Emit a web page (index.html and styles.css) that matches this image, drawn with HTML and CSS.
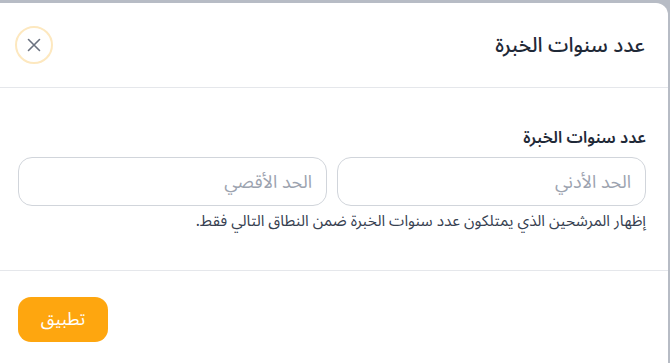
FILE: index.html
```html
<!DOCTYPE html>
<html lang="ar" dir="rtl">
<head>
<meta charset="utf-8">
<link rel="stylesheet" href="styles.css">
</head>
<body>
<div class="backdrop"></div>
<div class="modal">
  <div class="modal-header">
    <h2 class="title">عدد سنوات الخبرة</h2>
    <button class="close" aria-label="إغلاق">
      <svg width="14" height="14" viewBox="0 0 14 14"><path d="M1.5 1.5 L12.5 12.5 M12.5 1.5 L1.5 12.5" stroke="#6b7280" stroke-width="1.6" stroke-linecap="round" fill="none"/></svg>
    </button>
  </div>
  <div class="modal-body">
    <label class="label">عدد سنوات الخبرة</label>
    <div class="inputs">
      <input class="field" type="text" placeholder="الحد الأدني">
      <input class="field" type="text" placeholder="الحد الأقصي">
    </div>
    <p class="help">إظهار المرشحين الذي يمتلكون عدد سنوات الخبرة ضمن النطاق التالي فقط.</p>
  </div>
  <div class="modal-footer">
    <button class="apply">تطبيق</button>
  </div>
</div>
</body>
</html>
```
FILE: styles.css
```css
* { box-sizing: border-box; }
html, body { margin: 0; padding: 0; }
body {
  width: 670px;
  height: 363px;
  overflow: hidden;
  background: #b7bcc5;
  font-family: "Noto Sans Arabic", "Noto Sans", "DejaVu Sans", sans-serif;
  color: #1f2937;
}
.backdrop { height: 3px; }
.modal {
  background: #fff;
  width: 668px;
  margin-right: 2px;
  border-top-right-radius: 12px;
  height: 360px;
}
.modal-header {
  height: 85px;
  display: flex;
  align-items: center;
  justify-content: space-between;
  padding: 0 23px 0 15px;
  border-bottom: 1px solid #e5e7eb;
}
.title {
  margin: 0;
  font-size: 20.5px;
  font-weight: 500;
  color: #1f2937;
}
.close {
  width: 38px;
  height: 38px;
  border-radius: 50%;
  border: 2px solid #fde8bf;
  background: #fff;
  display: flex;
  align-items: center;
  justify-content: center;
  padding: 0;
}
.modal-body {
  padding: 38px 22px 0 18px;
  height: 183px;
  border-bottom: 1px solid #e5e7eb;
}
.label {
  display: block;
  font-size: 16.3px;
  font-weight: 600;
  color: #1f2937;
  line-height: 24px;
  margin-bottom: 7px;
}
.inputs {
  display: flex;
  gap: 10px;
}
.field {
  flex: 1 1 0;
  min-width: 0;
  width: 0;
  height: 49px;
  border: 1px solid #d1d5db;
  border-radius: 14px;
  padding: 0 14px;
  font-family: inherit;
  font-size: 18px;
  background: #fff;
  outline: none;
}
.field::placeholder { color: #9ca3af; }
.help {
  margin: 5px 0 0;
  font-size: 15.4px;
  color: #374151;
  line-height: 20px;
}
.modal-footer {
  padding: 26px 18px 0;
  display: flex;
  justify-content: flex-end;
}
.apply {
  width: 90px;
  height: 45px;
  border: none;
  border-radius: 13px;
  background: #fea60f;
  color: #fff;
  font-family: inherit;
  font-size: 17.5px;
}
```
